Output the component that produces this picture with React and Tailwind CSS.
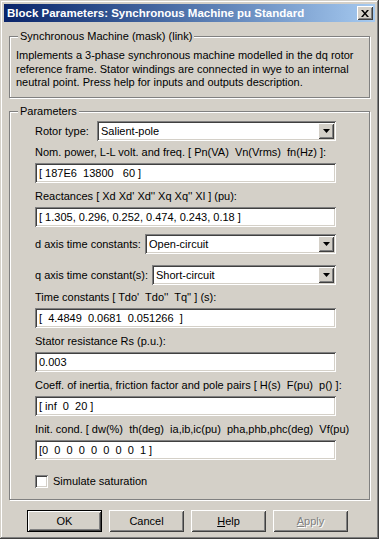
import React from "react";

const sunken =
  "bg-white shadow-[inset_1px_1px_0_#808080,inset_-1px_-1px_0_#ffffff,inset_2px_2px_0_#404040,inset_-2px_-2px_0_#d4d0c8]";
const raised =
  "bg-[#d4d0c8] shadow-[inset_1px_1px_0_#ffffff,inset_-1px_-1px_0_#404040,inset_2px_2px_0_#d4d0c8,inset_-2px_-2px_0_#808080]";

function GroupBox({ label, className, children }) {
  return (
    <div
      className={`relative mx-[5px] border border-[#808080] shadow-[1px_1px_0_#ffffff,inset_1px_1px_0_#ffffff] ${className}`}
    >
      <span className="absolute left-[8px] top-[-7px] bg-[#d4d0c8] px-[2px] leading-[13px]">
        {label}
      </span>
      {children}
    </div>
  );
}

function TextBox({ value }) {
  return (
    <div className={`${sunken} h-[20px] w-[301px] pl-[4px] pt-[3px] leading-[14px] whitespace-pre`}>
      {value}
    </div>
  );
}

function Select({ value, width }) {
  return (
    <div className={`${sunken} flex h-[20px] items-center p-[2px] ${width}`}>
      <span className="flex-1 pl-[2px] leading-[14px]">{value}</span>
      <div className={`${raised} flex h-[16px] w-[16px] items-center justify-center`}>
        <svg width="7" height="4" viewBox="0 0 7 4">
          <path d="M0 0h7L3.5 4z" fill="#000" />
        </svg>
      </div>
    </div>
  );
}

function Field({ label, value, className = "" }) {
  return (
    <div className={className}>
      <div className="h-[13px] leading-[13px] whitespace-pre">{label}</div>
      <div className="mt-[4px]">
        <TextBox value={value} />
      </div>
    </div>
  );
}

function Button({ children, primary, disabled }) {
  return (
    <div className={`h-[22px] w-[75px] ${primary ? "border border-black" : ""}`}>
      <div
        className={`${raised} flex h-full w-full items-center justify-center leading-[13px] ${
          disabled ? "text-[#808080] [text-shadow:1px_1px_0_#ffffff]" : "text-black"
        }`}
      >
        {children}
      </div>
    </div>
  );
}

export default function App() {
  return (
    <div className="h-[539px] w-[379px] bg-[#d4d0c8] p-[4px] font-['Liberation_Sans',Arial,sans-serif] text-[11px] text-black shadow-[inset_-1px_-1px_0_#404040,inset_1px_1px_0_#d4d0c8,inset_-2px_-2px_0_#808080,inset_2px_2px_0_#ffffff]">
      {/* title bar */}
      <div className="flex h-[18px] items-center bg-gradient-to-r from-[#0a246a] to-[#a6caf0] pl-[3px] pr-[2px]">
        <span className="flex-1 text-[11.5px] font-bold leading-[18px] text-white">
          Block Parameters: Synchronous Machine pu Standard
        </span>
        <div className={`${raised} flex h-[14px] w-[16px] items-center justify-center`}>
          <svg width="8" height="7" viewBox="0 0 8 7">
            <path d="M0 0h2l2 2.5L6 0h2L5 3.5 8 7H6L4 4.5 2 7H0l3-3.5z" fill="#000" />
          </svg>
        </div>
      </div>

      <GroupBox label="Synchronous Machine (mask) (link)" className="mt-[14px] h-[62px] px-[6px] pt-[12px]">
        <p className="leading-[13.5px]">
          Implements a 3-phase synchronous machine modelled in the dq rotor
          reference frame. Stator windings are connected in wye to an internal
          neutral point. Press help for inputs and outputs description.
        </p>
      </GroupBox>

      <GroupBox label="Parameters" className="mt-[13px] h-[389px] pl-[25px] pt-[9px]">
        <div className="flex h-[20px] items-center">
          <span className="w-[62px]">Rotor type:</span>
          <Select value="Salient-pole" width="w-[239px]" />
        </div>

        <Field
          className="mt-[5px]"
          label="Nom. power, L-L volt. and freq. [ Pn(VA)  Vn(Vrms)  fn(Hz) ]:"
          value="[ 187E6  13800   60 ]"
        />
        <Field
          className="mt-[7px]"
          label="Reactances [ Xd Xd' Xd'' Xq Xq'' Xl ] (pu):"
          value="[ 1.305, 0.296, 0.252, 0.474, 0.243, 0.18 ]"
        />

        <div className="mt-[7px] flex h-[20px] items-center">
          <span className="w-[110px]">d axis time constants:</span>
          <Select value="Open-circuit" width="w-[191px]" />
        </div>
        <div className="mt-[11px] flex h-[20px] items-center">
          <span className="w-[117px]">q axis time constant(s):</span>
          <Select value="Short-circuit" width="w-[184px]" />
        </div>

        <Field
          className="mt-[6px]"
          label="Time constants [ Tdo'  Tdo''  Tq'' ] (s):"
          value="[  4.4849  0.0681  0.051266  ]"
        />
        <Field className="mt-[7px]" label="Stator resistance Rs (p.u.):" value="0.003" />
        <Field
          className="mt-[7px]"
          label="Coeff. of inertia, friction factor and pole pairs [ H(s)  F(pu)  p() ]:"
          value="[ inf  0  20 ]"
        />
        <Field
          className="mt-[7px]"
          label="Init. cond. [ dw(%)  th(deg)  ia,ib,ic(pu)  pha,phb,phc(deg)  Vf(pu)"
          value="[0  0  0  0  0  0  0  0  1 ]"
        />

        <div className="mt-[15px] flex items-center">
          <div className={`${sunken} h-[13px] w-[13px]`} />
          <span className="ml-[5px] leading-[13px]">Simulate saturation</span>
        </div>
      </GroupBox>

      <div className="mt-[10px] flex gap-[7px] pl-[23px]">
        <Button primary>OK</Button>
        <Button>Cancel</Button>
        <Button>
          <span>
            <span className="underline">H</span>elp
          </span>
        </Button>
        <Button disabled>
          <span>
            <span className="underline">A</span>pply
          </span>
        </Button>
      </div>
    </div>
  );
}
